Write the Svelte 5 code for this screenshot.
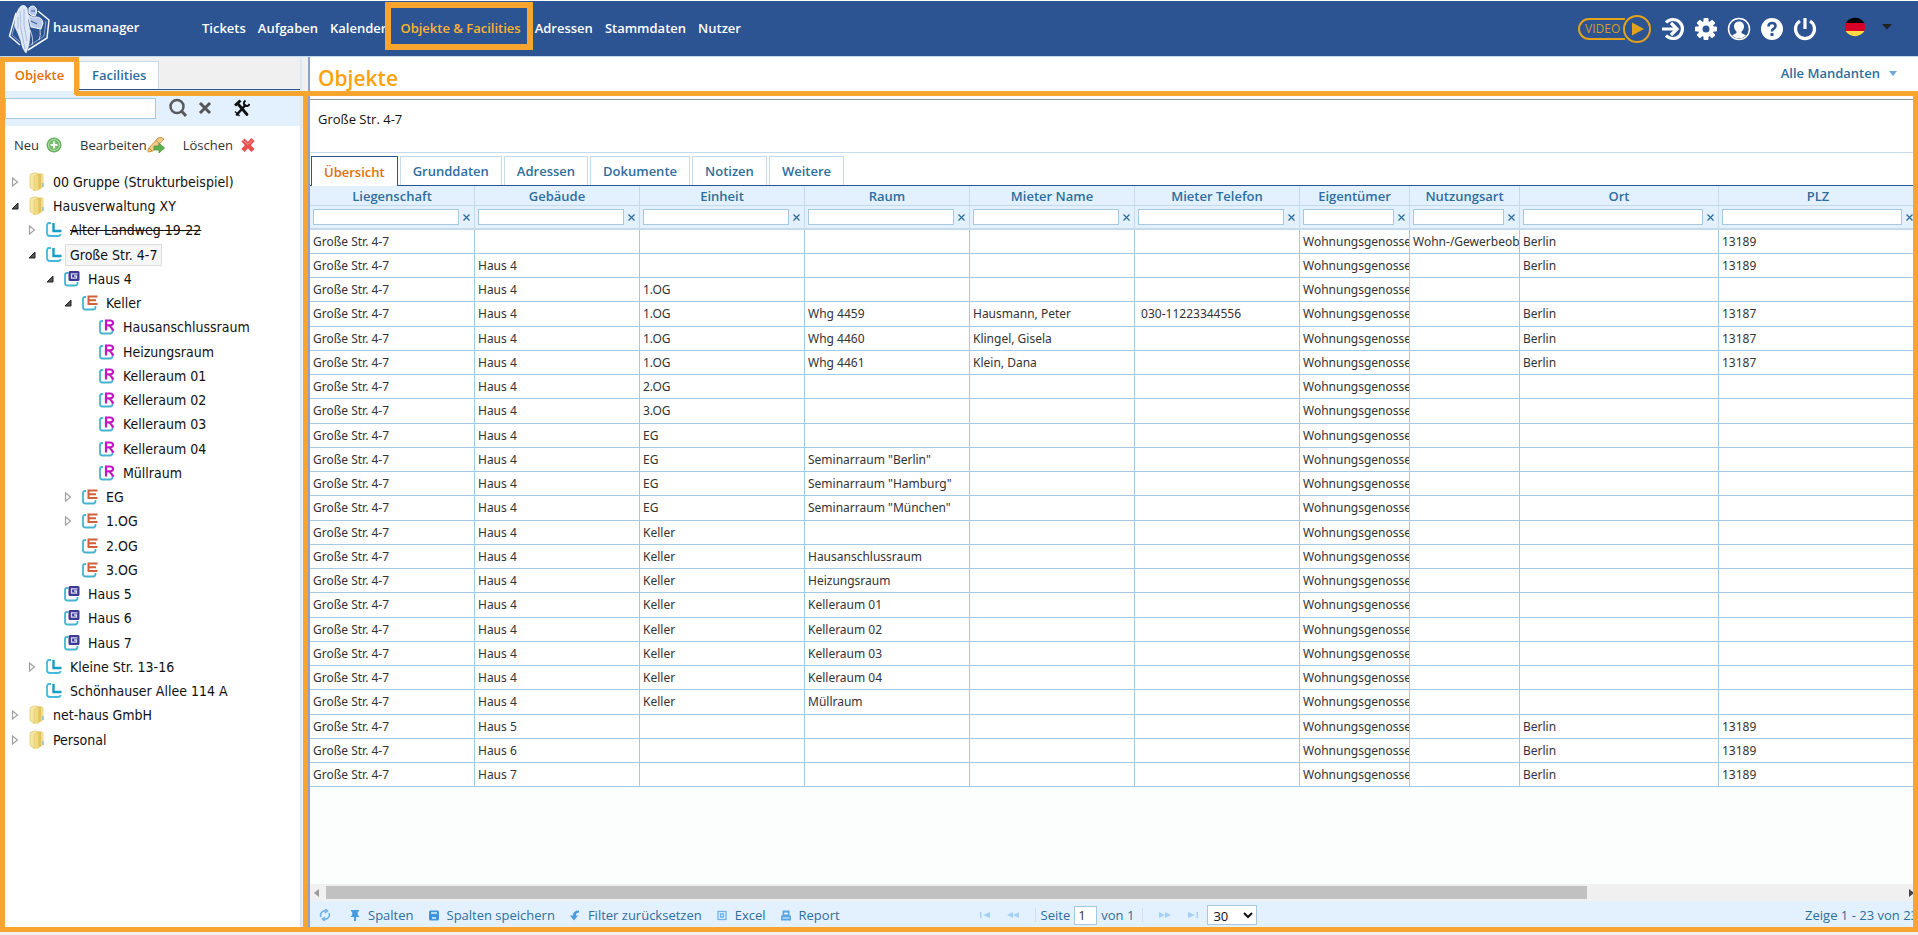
<script>
  const nav = ['Tickets', 'Aufgaben', 'Kalender', 'Objekte & Facilities', 'Adressen', 'Stammdaten', 'Nutzer'];
  const tabs = ['Übersicht', 'Grunddaten', 'Adressen', 'Dokumente', 'Notizen', 'Weitere'];
  const tree = [
    [0, 'folder', '00 Gruppe (Strukturbeispiel)', 'closed'],
    [0, 'folder', 'Hausverwaltung XY', 'open'],
    [1, 'L', 'Alter Landweg 19-22', 'closed', 'struck'],
    [1, 'L', 'Große Str. 4-7', 'open', 'selected'],
    [2, 'G', 'Haus 4', 'open'],
    [3, 'E', 'Keller', 'open'],
    [4, 'R', 'Hausanschlussraum'],
    [4, 'R', 'Heizungsraum'],
    [4, 'R', 'Kelleraum 01'],
    [4, 'R', 'Kelleraum 02'],
    [4, 'R', 'Kelleraum 03'],
    [4, 'R', 'Kelleraum 04'],
    [4, 'R', 'Müllraum'],
    [3, 'E', 'EG', 'closed'],
    [3, 'E', '1.OG', 'closed'],
    [3, 'E', '2.OG'],
    [3, 'E', '3.OG'],
    [2, 'G', 'Haus 5'],
    [2, 'G', 'Haus 6'],
    [2, 'G', 'Haus 7'],
    [1, 'L', 'Kleine Str. 13-16', 'closed'],
    [1, 'L', 'Schönhauser Allee 114 A'],
    [0, 'folder', 'net-haus GmbH', 'closed'],
    [0, 'folder', 'Personal', 'closed']
  ];
  const columns = ['Liegenschaft', 'Gebäude', 'Einheit', 'Raum', 'Mieter Name', 'Mieter Telefon', 'Eigentümer', 'Nutzungsart', 'Ort', 'PLZ'];
  const S = 'Große Str. 4-7', H = 'Haus 4', W = 'Wohnungsgenossenschaft', K = 'Keller';
  const rows = [
    [S, '', '', '', '', '', W, 'Wohn-/Gewerbeobjekt', 'Berlin', '13189'],
    [S, H, '', '', '', '', W, '', 'Berlin', '13189'],
    [S, H, '1.OG', '', '', '', W],
    [S, H, '1.OG', 'Whg 4459', 'Hausmann, Peter', ' 030-11223344556', W, '', 'Berlin', '13187'],
    [S, H, '1.OG', 'Whg 4460', 'Klingel, Gisela', '', W, '', 'Berlin', '13187'],
    [S, H, '1.OG', 'Whg 4461', 'Klein, Dana', '', W, '', 'Berlin', '13187'],
    [S, H, '2.OG', '', '', '', W],
    [S, H, '3.OG', '', '', '', W],
    [S, H, 'EG', '', '', '', W],
    [S, H, 'EG', 'Seminarraum "Berlin"', '', '', W],
    [S, H, 'EG', 'Seminarraum "Hamburg"', '', '', W],
    [S, H, 'EG', 'Seminarraum "München"', '', '', W],
    [S, H, K, '', '', '', W],
    [S, H, K, 'Hausanschlussraum', '', '', W],
    [S, H, K, 'Heizungsraum', '', '', W],
    [S, H, K, 'Kelleraum 01', '', '', W],
    [S, H, K, 'Kelleraum 02', '', '', W],
    [S, H, K, 'Kelleraum 03', '', '', W],
    [S, H, K, 'Kelleraum 04', '', '', W],
    [S, H, K, 'Müllraum', '', '', W],
    [S, 'Haus 5', '', '', '', '', W, '', 'Berlin', '13189'],
    [S, 'Haus 6', '', '', '', '', W, '', 'Berlin', '13189'],
    [S, 'Haus 7', '', '', '', '', W, '', 'Berlin', '13189']
  ];
</script>

{#snippet chip(kind)}
  {#if kind === 'folder'}
    <svg class="ico" width="16" height="20" viewBox="0 0 16 20">
      <path d="M1 2.500 L5 1 H8 V17 L5 18.500 L1 15.500Z" fill="#f5e6a2" stroke="#dcc468" stroke-width=".6" />
      <path d="M8 1.500 H13 V16 L8 18.500Z" fill="#dfc45c" />
      <path d="M5 4.500 L9.500 2.500 V18 L5 18.500Z" fill="#f1da80" stroke="#e0c662" stroke-width=".5" />
      <path d="M12 2 H14.500 V15 L12 16.500Z" fill="#efdc8c" />
      <path d="M14 11 V15" stroke="#6fb4e4" stroke-width="1.200" />
    </svg>
  {:else if kind === 'L'}
    <svg class="ico" width="16" height="16" viewBox="0 0 16 16" fill="none">
      <path d="M5 1 H3 Q1 1 1 4 V11 Q1 14 4 14 H12 Q14.500 14 14.500 12" stroke="#45b9dc" stroke-width="1.800" />
      <path d="M7.500 1 V9 H15.500" stroke="#1b9cc4" stroke-width="2.400" />
    </svg>
  {:else}
    <svg class="ico" width="16" height="16" viewBox="0 0 16 16" fill="none">
      <path d="M4 2 H3 Q1 2 1 4 V12 Q1 14.500 3.500 14.500 H11 Q13.500 14.500 13.500 12 V11" stroke="#45b5cf" stroke-width="1.800" />
      {#if kind === 'G'}
        <rect x="4.500" y="0" width="11" height="10" rx="1.500" fill="#3b3a93" />
        <path d="M13.500 2.800 H7.500 V7.200 H12.500 V5 H10" stroke="#dcdcf2" stroke-width="1.300" />
      {:else if kind === 'E'}
        <path d="M15.500 1.500 H6.500 V9 H15.500 M6.500 5.200 H14" stroke="#d2603a" stroke-width="2" />
      {:else}
        <path d="M7 11.500 V1.500 H11 Q14 1.500 14 4 Q14 6.300 11 6.300 H7 M10.500 6.300 L14.500 11.500" stroke="#c514c5" stroke-width="2.200" />
      {/if}
    </svg>
  {/if}
{/snippet}

<div class="app">
  <header>
    <div class="brand">
      <svg width="43" height="52" viewBox="0 0 43 52" fill="none" stroke="#fff">
        <path d="M8 10 L1.500 33 L12 42 M20 47 L39 35 L41 17 L30 8" stroke-width="1.500" opacity=".95" />
        <path d="M9 14 L4 32 L12 39 M38 18 L36 33 L21 43" stroke-width=".8" opacity=".6" />
        <path d="M13 3 Q17 1 19 5 Q21 12 20 18 L22 28 Q22 42 18 50 Q14 46 13 38 L9 28 Q6 24 7 18 Q8 8 13 3Z" fill="#dde7f6" stroke-width=".6" />
        <path d="M12 8 L13 26 L17 46 M16 6 L16 22 L19 38 M10 14 L10 26" stroke="#9db3d8" stroke-width=".8" />
        <path d="M21 5 Q25 1 28 5 Q30 9 27 13 Q23 13 21 10Z" fill="#b7c9e6" stroke-width=".9" />
        <path d="M20 12 Q24 15 28 14 Q34 14 35 20 L33 26 L23 24Z" fill="#b9cbe8" stroke-width=".9" />
        <path d="M23 18 L29 21 M23 8 H27" stroke="#3f639f" stroke-width="1.200" />
        <path d="M22 27 Q26 36 24 42 M32 26 Q33 33 31 37" stroke-width="1" opacity=".7" />
      </svg>
      <span>hausmanager</span>
    </div>
    <nav>
      {#each nav as n, i}<a href="#top" class:current={i === 3}>{n}</a>{/each}
    </nav>
    <div class="actions">
      <button class="video" aria-label="Video">
        <svg width="74" height="28" viewBox="0 0 74 28" fill="none" stroke="#e3a21c" stroke-width="2">
          <path d="M47 4 H11 A10 10 0 0 0 11 24 H47" />
          <circle cx="59" cy="14" r="13" />
          <path d="M54 7.500 L66 14 L54 20.500Z" fill="#e3a21c" stroke="none" />
        </svg>
        <span>VIDEO</span>
      </button>
      <button aria-label="Anmelden">
        <svg width="24" height="24" viewBox="0 0 24 24" fill="none" stroke="#fff" stroke-width="3.200">
          <path d="M5 5.500 A9.500 9.500 0 1 1 5 18.500" /><path d="M1 12 H15 M10 6 L16 12 L10 18" />
        </svg>
      </button>
      <button aria-label="Einstellungen">
        <svg width="24" height="24" viewBox="0 0 24 24">
          <g fill="#fff"><circle cx="12" cy="12" r="8" />
            {#each [0, 45, 90, 135] as a}<rect x="9.500" y="1" width="5" height="22" rx="1" transform="rotate({a} 12 12)" />{/each}
          </g><circle cx="12" cy="12" r="3.500" fill="#2c5392" />
        </svg>
      </button>
      <button aria-label="Profil">
        <svg width="24" height="24" viewBox="0 0 24 24">
          <circle cx="12" cy="12" r="10.500" fill="none" stroke="#fff" stroke-width="1.500" />
          <path d="M12 4.500 C8.500 4.500 7 7 7 9.500 C7 12 8.500 13.500 9.500 14.500 V16 L5 18.500 A10 10 0 0 0 19 18.500 L14.500 16 V14.500 C15.500 13.500 17 12 17 9.500 C17 7 15.500 4.500 12 4.500Z" fill="#fff" />
        </svg>
      </button>
      <button aria-label="Hilfe">
        <svg width="24" height="24" viewBox="0 0 24 24">
          <circle cx="12" cy="12" r="11" fill="#fff" />
          <path d="M8.500 9.500 Q8.500 6 12 6 Q15.500 6 15.500 9 Q15.500 10.800 13.500 11.900 Q12 12.800 12 14.500" fill="none" stroke="#2c5392" stroke-width="2.600" />
          <rect x="10.500" y="16" width="3" height="3" fill="#2c5392" />
        </svg>
      </button>
      <button aria-label="Abmelden">
        <svg width="24" height="24" viewBox="0 0 24 24" fill="none" stroke="#fff" stroke-width="3.200">
          <path d="M7 4 A9.500 9.500 0 1 0 17 4" /><path d="M12 1 V12" />
        </svg>
      </button>
      <button class="lang" aria-label="Sprache">
        <svg width="22" height="22" viewBox="0 0 22 22">
          <path d="M1.600 7 A11 11 0 0 1 20.400 7Z" fill="#000" />
          <path d="M1.600 7 H20.400 A11 11 0 0 1 20.400 15 H1.600 A11 11 0 0 1 1.600 7Z" fill="#d80027" />
          <path d="M1.600 15 H20.400 A11 11 0 0 1 1.600 15Z" fill="#ffda44" />
        </svg>
        <svg width="10" height="6" viewBox="0 0 10 6"><path d="M0 0 H10 L5 5.500Z" fill="#222" /></svg>
      </button>
    </div>
  </header>

  <div class="body">
    <aside>
      <div class="side-tabs">
        <button class="active">Objekte</button>
        <button>Facilities</button>
      </div>
      <div class="search">
        <input aria-label="Suche" />
        <button aria-label="Suchen"><svg width="20" height="20" viewBox="0 0 20 20" fill="none" stroke="#5a5a5a"><circle cx="9" cy="8.500" r="6.500" stroke-width="2.500" /><path d="M13.500 13 L18 18" stroke-width="3" /></svg></button>
        <button aria-label="Leeren"><svg width="14" height="14" viewBox="0 0 14 14" stroke="#555" stroke-width="3"><path d="M2 2 L12 12 M12 2 L2 12" /></svg></button>
        <button class="tools" aria-label="Werkzeuge">
          <svg width="16" height="18" viewBox="0 0 16 18" fill="none" stroke="#111">
            <path d="M4.500 5.500 L13 15.500" stroke-width="2.800" stroke-linecap="round" />
            <path d="M11 6.500 L3 15.500" stroke-width="2.600" stroke-linecap="round" />
            <path d="M1 6.500 L6.500 1.500" stroke-width="3" />
            <path d="M11.500 1.500 Q8.500 4 11 6.500 Q14 8 15.500 5" stroke-width="2" />
            <path d="M1 12.500 L5.500 17" stroke-width="1.200" />
          </svg>
        </button>
      </div>
      <div class="edit">
        <button>Neu <svg width="16" height="16" viewBox="0 0 16 16"><circle cx="8" cy="8" r="7" fill="#6dbb62" stroke="#5aa852" /><circle cx="8" cy="8" r="5.500" fill="none" stroke="#b6e0ae" /><path d="M8 4.500 V11.500 M4.500 8 H11.500" stroke="#fff" stroke-width="2.200" /></svg></button>
        <button class="tight">Bearbeiten<svg width="18" height="18" viewBox="0 0 18 18"><path d="M1 13 L11 2 Q14 0 17 3 L6 15 L1 16Z" fill="#f3c988" stroke="#cf9a50" /><path d="M2 12 L5 15 M9 4.500 L13 8" stroke="#c58548" /><path d="M7 10 H12 V7 L17.500 12 L12 17 V14 H7Z" fill="#5cb04c" stroke="#4a9a40" stroke-width=".8" /></svg></button>
        <button>Löschen <svg width="16" height="16" viewBox="0 0 16 16"><path d="M3 3 L13 13.500 M13 2.500 L3 13.500" stroke="#ea4f50" stroke-width="4.500" stroke-linejoin="round" /><path d="M3 3 L8 7.500 L12.500 3" stroke="#f79a9a" fill="none" /></svg></button>
      </div>
      <ul>
        {#each tree as [lvl, kind, label, state, mark]}
          <li class="l{lvl}">
            <span class="tw">
              {#if state === 'closed'}
                <svg width="8" height="10" viewBox="0 0 8 10"><path d="M1.500 1 L6.500 5 L1.500 9Z" fill="#fff" stroke="#a0a0a0" stroke-width="1.200" /></svg>
              {:else if state === 'open'}
                <svg width="8" height="8" viewBox="0 0 8 8"><path d="M7 1 V7 H1Z" fill="#555" stroke="#222" /></svg>
              {/if}
            </span>
            {@render chip(kind)}
            <span class="lbl {mark ?? ''}">{label}</span>
          </li>
        {/each}
      </ul>
      <i class="mark m-left"></i><i class="mark m-top"></i><i class="mark m-tab"></i>
    </aside>

    <main>
      <div class="title">
        <h1>Objekte</h1>
        <button>Alle Mandanten <svg width="8" height="5" viewBox="0 0 8 5"><path d="M0 0 H8 L4 5Z" fill="#6aa9da" /></svg></button>
      </div>
      <div class="object">Große Str. 4-7</div>
      <div class="tabs">
        {#each tabs as t, i}<button class:active={i === 0}>{t}</button>{/each}
      </div>
      <div class="grid">
        <table>
          <colgroup>{#each columns as c}<col class={c === 'Eigentümer' || c === 'Nutzungsart' ? 'narrow' : c === 'Ort' || c === 'PLZ' ? 'wide' : 'mid'} />{/each}</colgroup>
          <thead>
            <tr class="names">{#each columns as c}<th>{c}</th>{/each}</tr>
            <tr class="filters">{#each columns as c}<td><div><input aria-label={c} /><button aria-label="Filter leeren"><svg width="7" height="7" viewBox="0 0 7 7" stroke="#2e6e9e" stroke-width="1.300"><path d="M.5 .5 L6.500 6.500 M6.500 .5 L.5 6.500" /></svg></button></div></td>{/each}</tr>
          </thead>
          <tbody>
            {#each rows as r}<tr>{#each columns as _, i}<td>{r[i] ?? ''}</td>{/each}</tr>{/each}
          </tbody>
        </table>
      </div>
      <div class="scroll">
        <svg width="8" height="10" viewBox="0 0 8 10"><path d="M6 1 V9 L1 5Z" fill="#9a9a9a" /></svg>
        <div class="track"><div class="thumb"></div></div>
        <svg width="8" height="10" viewBox="0 0 8 10"><path d="M2 1 V9 L7 5Z" fill="#444" /></svg>
      </div>
      <footer>
        <div class="tools-left">
          <button aria-label="Neu laden"><svg width="12" height="12" viewBox="0 0 12 12" fill="none" stroke="#6fb1e6" stroke-width="1.600"><path d="M2 8 A4.300 4.300 0 0 1 7 2 M10 4 A4.300 4.300 0 0 1 5 10" /><path d="M6 0 L8.500 2 L6 4 M6 8 L3.500 10 L6 12" /></svg></button>
          <button><svg width="12" height="12" viewBox="0 0 12 12" fill="#4a9ade"><path d="M2 1 H10 V2.500 H8.800 V6 L10.500 8 H7 V12 H5 V8 H1.500 L3.200 6 V2.500 H2Z" /></svg>Spalten</button>
          <button><svg width="12" height="12" viewBox="0 0 12 12"><rect x="1" y="1.500" width="10" height="10" rx="1.500" fill="#3f94dc" /><path d="M3 4 H9 M4 9 H8" stroke="#e3f1fe" stroke-width="1.500" /></svg>Spalten speichern</button>
          <button><svg width="12" height="12" viewBox="0 0 12 12" fill="#4a9ade"><path d="M10 1.500 Q4 1.500 4 6.500 H1 L5 11.500 L9 6.500 H6.800 Q6.800 3.800 10 3.500Z" /></svg>Filter zurücksetzen</button>
          <button><svg width="12" height="12" viewBox="0 0 12 12" fill="none" stroke="#6fb1e6" stroke-width="1.300"><rect x="2" y="2.500" width="8" height="8" /><path d="M4.500 5 H7.500 V8 H4.500Z" /></svg>Excel</button>
          <button><svg width="12" height="12" viewBox="0 0 12 12"><path d="M2.500 1.500 H9.500 V6.500 H11 V11.500 H1 V6.500 H2.500Z" fill="#5aa5e2" /><path d="M4.500 4 H7.500 V5 H4.500Z M2.500 9 H9.500" fill="#e3f1fe" stroke="#e3f1fe" /></svg>Report</button>
        </div>
        <div class="pager">
          <button aria-label="Erste Seite"><svg width="12" height="8" viewBox="0 0 12 8" fill="#a6d0f5"><path d="M1 1 H2.500 V7 H1Z M11 1 V7 L4 4Z" /></svg></button>
          <button aria-label="Vorige Seite"><svg width="12" height="8" viewBox="0 0 12 8" fill="#a6d0f5"><path d="M6 1 V7 L0 4Z M12 1 V7 L6 4Z" /></svg></button>
          <label><span>Seite</span><input value="1" /><span>von 1</span></label>
          <button aria-label="Nächste Seite"><svg width="12" height="8" viewBox="0 0 12 8" fill="#a6d0f5"><path d="M0 1 V7 L6 4Z M6 1 V7 L12 4Z" /></svg></button>
          <button aria-label="Letzte Seite"><svg width="12" height="8" viewBox="0 0 12 8" fill="#a6d0f5"><path d="M1 1 V7 L8 4Z M9.500 1 H11 V7 H9.500Z" /></svg></button>
          <select aria-label="Zeilen pro Seite"><option>30</option></select>
        </div>
        <div class="count">Zeige 1 - 23 von 23</div>
      </footer>
    </main>
    <i class="mark m-line"></i><i class="mark m-split"></i><i class="mark m-right"></i><i class="mark m-bottom"></i>
  </div>
</div>

<style>
  :global(body) { background: #fff; overflow: hidden; }
  * { box-sizing: border-box; }
  .app { height: 100vh; display: flex; flex-direction: column; font-family: "Open Sans", "Noto Sans", sans-serif; font-size: 13px; color: #333; }
  button { border: 0; background: none; padding: 0; font: inherit; color: inherit; display: flex; align-items: center; }
  svg { display: block; flex: none; }
  input, select { font: inherit; color: #333; border: 1px solid #a6c9e2; background: #fff; border-radius: 0; padding: 0 3px; min-width: 0; }

  header { height: 57px; flex: none; background: #2c5392; border-top: 1px solid #fff; border-bottom: 1px solid #c0d8ee; display: flex; align-items: center; color: #fff; }
  .brand { width: 202px; display: flex; align-items: center; padding-left: 8px; gap: 2px; font-weight: 600; }
  .brand span { padding-bottom: 4px; }
  nav { display: flex; gap: 12px; font-weight: 600; padding-bottom: 2px; }
  nav a { color: #fff; text-decoration: none; position: relative; }
  nav .current { color: #fbb432; padding: 0 2px; }
  nav .current::after { content: ""; position: absolute; inset: -17px -10px -13px -13px; border: 6px solid #f8a530; }
  .actions { margin-left: auto; display: flex; gap: 9px; align-items: center; padding-right: 26px; }
  .video { position: relative; }
  .video span { position: absolute; left: 7px; color: #d29b2a; font-size: 12px; }
  .lang { gap: 16px; margin-left: 18px; padding-bottom: 3px; }

  .body { flex: 1; min-height: 0; display: flex; position: relative; background: #f0f0f0; }
  aside { width: 302px; flex: none; margin-right: 6px; border-right: 2px solid #dbe8f5; background: #fff; position: relative; margin-bottom: 3px; }
  .side-tabs { height: 33px; background: #f0f0f0; border-bottom: 1px solid #2c5392; display: flex; gap: 5px; padding: 4px 0 0 5px; color: #2e6e9e; font-weight: 600; }
  .side-tabs button { background: #fff; border: 1px solid #c5dbec; border-bottom: 0; padding: 0 12px 2px; justify-content: center; }
  .side-tabs .active { color: #e17009; width: 69px; padding: 0 0 2px; border: 0; height: 30px; }
  .search { height: 36px; background: #e3f1fe; display: flex; align-items: center; padding-left: 5px; }
  .search input { width: 151px; height: 21px; margin-right: 12px; }
  .search button { margin-right: 10px; }
  .search .tools { margin-left: 12px; }
  .edit { display: flex; align-items: center; height: 38px; padding-left: 14px; gap: 18px; }
  .edit button { gap: 7px; }
  .edit .tight { gap: 0; }
  ul { list-style: none; margin: 6px 0 0; padding: 0; color: #111; font-family: "DejaVu Sans Condensed", "DejaVu Sans", sans-serif; font-size: 14px; }
  li { height: 24px; display: flex; align-items: center; padding-left: 10px; }
  li:nth-child(4n) { height: 25px; }
  li.l1 { padding-left: 27px; } li.l2 { padding-left: 45px; } li.l3 { padding-left: 63px; } li.l4 { padding-left: 80px; }
  .tw { width: 10px; margin-right: 9px; display: flex; justify-content: center; }
  .ico { margin-right: 3px; }
  .lbl { padding: 2px 4px; border: 1px solid transparent; white-space: nowrap; }
  .struck { text-decoration: line-through; }
  .selected { background: #f6f6f6; border-color: #ddd; }

  main { flex: 1; min-width: 0; display: flex; flex-direction: column; border-left: 2px solid #8fa3c8; background: #fff; margin-bottom: 3px; }
  .title { height: 43px; border-bottom: 1px solid #8c9a94; padding: 0 21px 1px 8px; display: flex; align-items: center; justify-content: space-between; }
  h1 { margin: 0; font-size: 21px; line-height: 28px; font-weight: 600; color: #ffa10f; }
  .title button { color: #2e6e9e; font-weight: 600; gap: 9px; padding-bottom: 9px; }
  .object { height: 53px; border-bottom: 1px solid #c5dbec; padding: 10px 8px; color: #111; font-weight: 500; }
  .tabs { height: 33px; border-bottom: 1px solid #2c5392; display: flex; gap: 2px; padding: 3px 1px 0; color: #2e6e9e; font-weight: 600; }
  .tabs button { border: 1px solid #c5dbec; border-bottom: 0; padding: 0 12px; }
  .tabs .active { color: #e17009; border: 1px solid #2c5392; border-bottom: 0; background: #fff; height: 30px; }
  .grid { flex: 1; min-height: 0; overflow: hidden; background: #fcfefe; }
  table { border-collapse: separate; border-spacing: 0; table-layout: fixed; width: 1608px; }
  .mid { width: 165px; } .narrow { width: 110px; } .wide { width: 199px; }
  .names th { height: 20px; padding: 0; background: #e3f1fe; color: #2e6e9e; font-weight: 600; line-height: 18px; border-right: 1px solid #c5dbec; border-bottom: 1px solid #c5dbec; }
  .filters td { height: 24px; padding: 0 4px 0 3px; background: #e3f1fe; border-right: 1px solid #c5dbec; border-bottom: 2px solid #c5dbec; }
  .filters div { display: flex; align-items: center; gap: 4px; }
  .filters input { flex: 1; width: 0; height: 16px; }
  tbody td { height: 24px; padding: 0 0 0 3px; background: #fff; border-right: 1px solid #a6c9e2; border-bottom: 1px solid #a6c9e2; font-family: "Noto Sans", sans-serif; font-size: 12px; line-height: 16px; white-space: pre; overflow: hidden; }
  tbody tr:nth-child(4n) td { height: 25px; }
  .scroll { height: 17px; flex: none; background: #f0f0f0; display: flex; align-items: center; padding: 0 3px; gap: 5px; }
  .track { flex: 1; height: 13px; }
  .thumb { width: 80%; height: 100%; background: #c1c1c1; }
  footer { height: 31px; flex: none; background: #e3f1fe; display: grid; grid-template-columns: 1fr auto 1fr; align-items: start; color: #2e6e9e; white-space: nowrap; }
  footer > div { display: flex; align-items: center; height: 28px; }
  .tools-left { padding-left: 9px; gap: 14px; }
  .tools-left button { gap: 7px; }
  .tools-left button:first-child { margin-right: 4px; }
  .pager { gap: 16px; padding-left: 8px; }
  .pager label { display: flex; align-items: center; gap: 4px; border: 1px solid #d5dfea; border-width: 0 1px; height: 14px; padding: 0 8px 0 5px; }
  .pager input { width: 23px; height: 19px; }
  .pager select { width: 50px; height: 20px; padding: 0 1px; margin-left: -8px; color: #111; }
  .count { justify-content: flex-end; }

  .mark { position: absolute; background: #f8a530; pointer-events: none; }
  .m-left { left: 0; top: 0; bottom: 0; width: 5px; }
  .m-top { left: 0; top: 0; width: 79px; height: 5px; }
  .m-tab { left: 74px; top: 0; width: 5px; height: 38px; }
  .m-line { left: 76px; right: 0; top: 34px; height: 5px; }
  .m-split { left: 303px; top: 34px; bottom: 3px; width: 5px; }
  .m-right { right: 0; top: 34px; bottom: 3px; width: 5px; }
  .m-bottom { left: 0; right: 0; bottom: 3px; height: 5px; }
</style>
